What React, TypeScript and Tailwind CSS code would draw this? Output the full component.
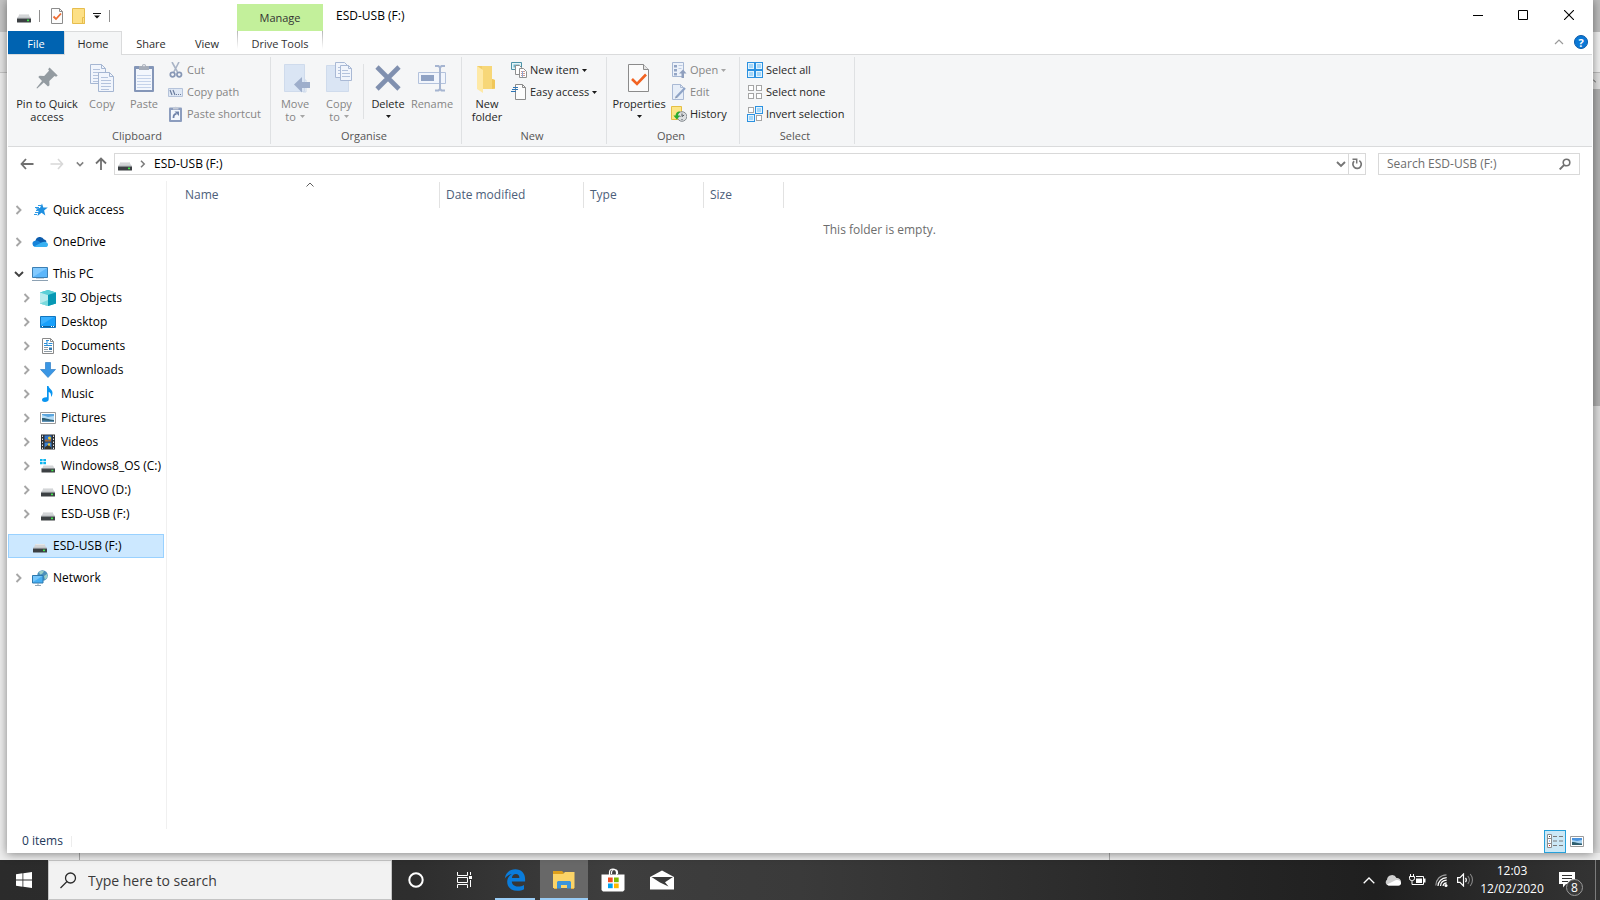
import React from "react";

type IconProps = { className?: string };

/* ---------- shared glyphs ---------- */

function DriveIcon({ className = "h-4 w-4" }: IconProps) {
  return (
    <svg viewBox="0 0 16 16" className={className} aria-hidden="true">
      <path d="M3.6 6h8.800l2.400 4.500H1.200z" fill="#d3d5d7" />
      <path d="M3.6 6h8.800l.5 1H3.100z" fill="#e6e7e8" />
      <rect x="1" y="10.200" width="14" height="4.300" rx="0.6" fill="#3c4043" />
      <rect x="1" y="9.800" width="14" height="1" fill="#8d9194" />
      <rect x="11" y="11.600" width="2" height="1.600" fill="#3ee84a" />
    </svg>
  );
}

function SystemDriveIcon() {
  return (
    <svg viewBox="0 0 16 16" className="h-4 w-4" aria-hidden="true">
      <path d="M3.500 7.500h9.500l1.900 3.400H1.800z" fill="#d3d5d7" />
      <rect x="1.500" y="10.500" width="13.500" height="4" rx="0.6" fill="#3c4043" />
      <rect x="1.500" y="10.200" width="13.500" height="0.900" fill="#8d9194" />
      <rect x="11.400" y="11.800" width="2" height="1.500" fill="#3ee84a" />
      <path d="M0 1h2.600v2.300H0zM3.300 1H6v2.300H3.300zM0 4h2.600v2.300H0zM3.300 4H6v2.300H3.300z" fill="#0fb5ee" />
    </svg>
  );
}

function Chevron({ className }: IconProps) {
  return (
    <svg viewBox="0 0 10 10" className={className ?? "h-[10px] w-[10px]"} fill="none" aria-hidden="true">
      <path d="M2.500 1l4 4-4 4" stroke="currentColor" strokeWidth="1.900" />
    </svg>
  );
}

function ChevronDown({ className }: IconProps) {
  return (
    <svg viewBox="0 0 10 10" className={className ?? "h-[10px] w-[10px]"} fill="none" aria-hidden="true">
      <path d="M1 3l4 4 4-4" stroke="currentColor" strokeWidth="1.900" />
    </svg>
  );
}

function Caret({ muted = false }: { muted?: boolean }) {
  return (
    <svg viewBox="0 0 5 3" className={muted ? "h-[3px] w-[5px] text-[#a6a6a6]" : "h-[3px] w-[5px] text-[#1a1a1a]"} aria-hidden="true">
      <path d="M0 0h5L2.500 3z" fill="currentColor" />
    </svg>
  );
}

/* ---------- quick access toolbar ---------- */

function CheckPage({ className = "h-4 w-4" }: IconProps) {
  return (
    <svg viewBox="0 0 16 16" className={className} fill="none" aria-hidden="true">
      <path d="M2.500.500h8l3 3v12h-11z" fill="#fcfcfc" stroke="#8c8c8c" />
      <path d="M10.500.500v3h3" stroke="#8c8c8c" />
      <path d="M4.500 8.500L7 11l5-5.500" stroke="#ed6b31" strokeWidth="1.800" />
    </svg>
  );
}

function FolderTall() {
  return (
    <svg viewBox="0 0 14 16" className="h-4 w-[14px]" fill="none" aria-hidden="true">
      <path d="M.500.500h12v15H.500z" fill="#fde086" stroke="#e6bd4d" />
      <path d="M10.500 9.500h2v6h-2z" fill="#fde086" stroke="#e6bd4d" />
    </svg>
  );
}

/* ---------- ribbon: large icons ---------- */

function PinIcon() {
  return (
    <svg viewBox="0 0 32 32" className="h-8 w-8" aria-hidden="true">
      <path d="M18.500 5.600l8.200 8-1.600 1.200-1.600-.700-5.200 4.800.200 4.400-1.500 1.200-4.200-4.100-6.600 6-.800-.500 5.600-7-3.700-3.900 1.300-1.300 4.600.300 4.800-5.200-.800-1.600z" fill="#939ba1" />
    </svg>
  );
}

function DocSheet({ x, y }: { x: number; y: number }) {
  return (
    <g transform={`translate(${x} ${y})`}>
      <path d="M.500.500h11l4 4v15H.500z" fill="#f1f5fc" stroke="#a5b6d2" />
      <path d="M11.500.500v4h4" fill="none" stroke="#a5b6d2" />
      <path d="M3 5.500h7M3 8.500h10M3 11.500h10M3 14.500h10M3 17.500h8" stroke="#b4c3dd" />
    </g>
  );
}

function CopyIcon() {
  return (
    <svg viewBox="0 0 32 32" className="h-8 w-8" aria-hidden="true">
      <DocSheet x={4} y={2} />
      <DocSheet x={12} y={10} />
    </svg>
  );
}

function PasteIcon() {
  return (
    <svg viewBox="0 0 32 32" className="h-8 w-8" aria-hidden="true">
      <rect x="6" y="4" width="20" height="26" rx="1" fill="#8496b8" />
      <rect x="8" y="7" width="16" height="21" fill="#f3f7fd" />
      <path d="M9 13.500h14M9 16.500h14M9 19.500h14M9 22.500h14M9 25.500h14" stroke="#c5d3ea" />
      <path d="M11 8V4h3a2 2 0 014 0h3v4z" fill="#a6adb9" />
      <circle cx="16" cy="3.600" r="0.800" fill="#f5f6f7" />
    </svg>
  );
}

function MoveIcon() {
  return (
    <svg viewBox="0 0 32 32" className="h-8 w-8" aria-hidden="true">
      <path d="M5.500 2.500h20v27h-20z" fill="#dae5f4" stroke="#cfdbec" />
      <path d="M26 18h1v12h-3" fill="none" stroke="#cfdbec" />
      <path d="M15 22.500l8-7.500v5h8v6h-8v4.500z" fill="#9eaecb" />
    </svg>
  );
}

function CopyToIcon() {
  return (
    <svg viewBox="0 0 32 32" className="h-8 w-8" aria-hidden="true">
      <path d="M3.500 3.500h22v26h-22z" fill="#dae5f4" stroke="#cfdbec" />
      <path d="M12.500.500h9l3 3v12h-12z" fill="#f1f5fc" stroke="#a9b9d5" />
      <path d="M15 5.500h8M15 8.500h8M15 11.500h8" stroke="#b4c3dd" />
      <path d="M17.500 3.500h8l3 3v12h-11z" fill="#f1f5fc" stroke="#a9b9d5" />
      <path d="M25.500 3.500v3h3" fill="none" stroke="#a9b9d5" />
      <path d="M19 8.500h6M19 11.500h8M19 14.500h8" stroke="#b4c3dd" />
    </svg>
  );
}

function DeleteIcon() {
  return (
    <svg viewBox="0 0 32 32" className="h-8 w-8" fill="none" aria-hidden="true">
      <path d="M5 5l22 22M27 5L5 27" stroke="#8090af" strokeWidth="4.600" />
    </svg>
  );
}

function RenameIcon() {
  return (
    <svg viewBox="0 0 32 32" className="h-8 w-8" fill="none" aria-hidden="true">
      <path d="M2.500 10.500h27v11h-27z" fill="#f1f5fc" stroke="#b3c2dc" />
      <rect x="5" y="13" width="13" height="6" fill="#8fa2c4" />
      <path d="M19 4h3.500l1.500 1.500L25.500 4H29M24 5v22M19 28.500h3.500L24 27l1.500 1.500H29" stroke="#a6b5d1" strokeWidth="2" />
    </svg>
  );
}

function NewFolderIcon() {
  return (
    <svg viewBox="0 0 32 32" className="h-8 w-8" aria-hidden="true">
      <path d="M6 4h15v13l3 2v8H6z" fill="#f1cd69" />
      <path d="M11 4h10v13l3 1v9H11z" fill="#f7d778" />
      <path d="M6 4l6 4v23l-6-4z" fill="#fee9a6" />
      <path d="M21 17l3 1v8l-3 1z" fill="#f0c75b" />
    </svg>
  );
}

function PropertiesIcon() {
  return (
    <svg viewBox="0 0 32 32" className="h-8 w-8" fill="none" aria-hidden="true">
      <path d="M5.500 2.500h15l5 5v22h-20z" fill="#fbfbfb" stroke="#8b8b8b" />
      <path d="M20.500 2.500v5h5" fill="#e5e5e5" stroke="#8b8b8b" />
      <path d="M9 17l5 5 9-9.500" stroke="#f26322" strokeWidth="2.600" />
    </svg>
  );
}

/* ---------- ribbon: small icons ---------- */

function Svg16({ children }: { children: React.ReactNode }) {
  return (
    <svg viewBox="0 0 16 16" className="h-4 w-4 shrink-0" fill="none" aria-hidden="true">
      {children}
    </svg>
  );
}

const CutIcon = () => (
  <Svg16>
    <path d="M4 0l5.500 10M11 0L5.800 10" stroke="#a9b4c6" strokeWidth="1.600" />
    <circle cx="4.600" cy="12.600" r="2.300" stroke="#8797b5" strokeWidth="1.700" />
    <circle cx="11.200" cy="12.600" r="2.300" stroke="#8797b5" strokeWidth="1.700" />
  </Svg16>
);
const CopyPathIcon = () => (
  <Svg16>
    <path d="M.500 4.500h14v8H.500z" fill="#dfe8f5" stroke="#b5c3da" />
    <path d="M2 6l2 5M5 6l2 5" stroke="#6b7d9e" strokeWidth="1.200" />
    <path d="M8 10.500h1M10 10.500h1M12 10.500h1" stroke="#6b7d9e" />
  </Svg16>
);
const PasteShortcutIcon = () => (
  <Svg16>
    <rect x="1" y="1.500" width="13" height="14.500" rx="1" fill="#8c9dbe" />
    <rect x="3" y="4" width="9" height="10" fill="#f3f7fd" />
    <path d="M5 3.500V2h1.500a1.200 1.200 0 012.400 0h1.600v1.500z" fill="#c3cad6" />
    <path d="M5.500 12c0-3 1-4.200 3-4.200" stroke="#6f83aa" strokeWidth="1.800" />
    <path d="M6.500 5.500h4.500V10z" fill="#6f83aa" />
  </Svg16>
);
const NewItemIcon = () => (
  <Svg16>
    <path d="M.500.500h10v7H.500z" fill="#e4f4f8" stroke="#4c93a8" />
    <path d="M2.500 2.500h6v3h-6z" fill="#68b5cb" />
    <path d="M4.500 3.500h4l2 2v7h-6z" fill="#fff" stroke="#8f8f8f" />
    <path d="M8.500 6.500h4l3 3v6h-7z" fill="#fff" stroke="#8f8f8f" />
    <path d="M10 9.500h4M10 11.500h4M10 13.500h4" stroke="#d09a92" />
    <path d="M11.500 9v6" stroke="#91a8d4" />
  </Svg16>
);
const EasyAccessIcon = () => (
  <Svg16>
    <path d="M4.500.500h7l3 3v12h-10z" fill="#fcfcfc" stroke="#8b8b8b" />
    <path d="M11.500.500v3h3" stroke="#8b8b8b" />
    <path d="M2 3.500h5M1 5.500h6M0 7.500h5" stroke="#2e75b5" strokeWidth="1.200" />
  </Svg16>
);
const OpenIcon = () => (
  <Svg16>
    <path d="M1.500.500h11v14h-11z" fill="#edf2fa" stroke="#a6b7d3" />
    <path d="M3 3h3v2.500H3zM3 7h3v2.500H3zM3 11h3v2.500H3z" fill="#93a5c5" />
    <path d="M7.500 3.500h4M7.500 6.500h3" stroke="#bccae0" />
    <path d="M12 7.500l3.500 4H13V16h-2.500v-4.500H8z" fill="#8f9fbe" />
  </Svg16>
);
const EditIcon = () => (
  <Svg16>
    <path d="M1.500.500h8l3 3v12h-11z" fill="#e7eef8" stroke="#a9b9d4" />
    <path d="M9.500.500v3h3" stroke="#a9b9d4" />
    <path d="M5.500 13L14 4" stroke="#8fa4c7" strokeWidth="2.200" />
    <path d="M4 14.500l.8-2.400 1.500 1.500z" fill="#7f8ba2" />
  </Svg16>
);
const HistoryIcon = () => (
  <Svg16>
    <path d="M.500.500h10v13H.500z" fill="#fde687" stroke="#e5bf45" />
    <circle cx="11" cy="10.500" r="4.800" fill="#dcdfe1" stroke="#858b90" />
    <path d="M11 7.500v3l2.200-1.500M8.500 10.500h1M11 13v1" stroke="#50565c" />
    <path d="M8.800 5.200C5.800 5.600 4.500 7.500 4.600 9.600H2.400l3.400 4 3.300-4H7c0-1.500.500-2.600 1.800-3.200z" fill="#2dad2f" />
  </Svg16>
);

function SelectGlyph({ on }: { on: boolean[] }) {
  const spots = [
    [0, 0],
    [8, 0],
    [0, 8],
    [8, 8],
  ];
  return (
    <Svg16>
      {spots.map(([x, y], i) =>
        on[i] ? (
          <g key={i}>
            <rect x={x + 0.5} y={y + 0.5} width="7" height="7" fill="#e3f3fd" stroke="#2b91e0" />
            <rect x={x + 2} y={y + 2} width="4" height="4" fill="#a5d7f9" />
          </g>
        ) : (
          <rect key={i} x={x + 1.5} y={y + 1.5} width="5" height="5" fill="#fff" stroke="#a5a5a5" />
        ),
      )}
    </Svg16>
  );
}

/* ---------- navigation tree icons ---------- */

const StarIcon = () => (
  <Svg16>
    <path d="M10 1.500l1.300 4 4.500.100-3.700 2.900 1.200 5-3.800-2.700L5.500 14l1-5-2.900-2.500L8 6z" fill="#1e8fe0" />
    <path d="M6 3.500h3M3 5.500h4M4 8.500h3M3 10.500h4M2 12.500h3" stroke="#2f9ae6" />
  </Svg16>
);
const OneDriveIcon = () => (
  <Svg16>
    <path d="M3.500 7A4.500 4.500 0 0112 5.500c1.500.200 2 1 2.500 2L8 11 2 8z" fill="#0b5cad" />
    <path d="M3.300 13a3.200 3.200 0 01-.300-6.300C4.700 6 6.500 6.500 8 8l5 5z" fill="#1683d9" />
    <path d="M2 12.600L10 8.200c2-1 5.700-.800 6 2.300.100 1.500-.900 2.500-2.400 2.500H3.300z" fill="#38b1f2" />
  </Svg16>
);
const ThisPcIcon = () => (
  <Svg16>
    <path d="M.500 1.500h15v10H.500z" fill="#5cb6fa" stroke="#3c7fb3" />
    <path d="M1 11V2h14z" fill="#82caff" />
    <path d="M4 12.500h8" stroke="#c7d2db" />
    <path d="M0 14.500h16" stroke="#8da1b3" />
  </Svg16>
);
const ObjectsIcon = () => (
  <Svg16>
    <path d="M8 0l8 2.500v11L8 16 0 13.500v-11z" fill="#2bbccb" />
    <path d="M8 0l8 2.500L8 5 0 2.500z" fill="#5acfd6" />
    <path d="M0 2.500L8 5v11l-8-2.500z" fill="#b8ecee" />
    <path d="M8 5l8-2.500v11L8 16z" fill="#0798b4" />
    <path d="M0 13.500l8-3.500v6z" fill="#7adadd" />
  </Svg16>
);
const DesktopIcon = () => (
  <Svg16>
    <path d="M.500 2.500h15v11H.500z" fill="#18a0fb" stroke="#1276bf" />
    <path d="M1 11l13-8H1z" fill="#3bb1ff" />
    <path d="M1 12.500h14" stroke="#0f5f9c" />
    <path d="M2 12.500h1M11 12.500h1M13 12.500h1" stroke="#fff" />
  </Svg16>
);
const DocumentsIcon = () => (
  <Svg16>
    <path d="M2.500.500h8l3 3v12h-11z" fill="#fff" stroke="#8a8a8a" />
    <path d="M10.500.500v3h3" stroke="#8a8a8a" />
    <path d="M6 2.500h3M4 5.500h3M8.500 5.500h4M4 7.500h8M7 3v4" stroke="#2b8fd8" />
    <path d="M4 9.500h4M4 11.500h4M4 13.500h8" stroke="#8f9ca6" />
    <path d="M9 9.500h3v2.500H9z" fill="#2f79b0" />
  </Svg16>
);
const DownloadsIcon = () => (
  <Svg16>
    <path d="M5.500.500h5v7h5L8 15.500.500 7.500h5z" fill="#3a96e4" stroke="#2f7fc7" strokeWidth="0.700" />
  </Svg16>
);
const MusicIcon = () => (
  <Svg16>
    <path d="M7 0h1.500c.500 2.500 4 3.500 4 7 0 2-.800 3-1.500 4 .300-3-.500-4.500-2.300-5v7.200C8.700 15 7 16 5 16c-1.800 0-3-.800-3-2.200C2 12 4 11 7 11.200z" fill="#0a95f0" />
  </Svg16>
);
const PicturesIcon = () => (
  <Svg16>
    <path d="M.500 2.500h15v11H.500z" fill="#fff" stroke="#9a9a9a" />
    <rect x="2" y="4" width="12" height="8" fill="#b5dcf6" />
    <path d="M2 4h12v2L8 7 2 5z" fill="#5ca6de" />
    <path d="M2 8c3-.500 5 1 12 2v2H2z" fill="#2f5f73" />
    <path d="M2 10.500c4 0 8 .500 12 .800V12H2z" fill="#5f93b8" />
  </Svg16>
);
const VideosIcon = () => (
  <Svg16>
    <rect x="1" y="0.500" width="14" height="15" fill="#2c2f33" />
    <path d="M2.500 1.500v14M13.500 1.500v14" stroke="#e9e9e9" strokeDasharray="1.500 1.500" />
    <rect x="4.500" y="1.500" width="7" height="6" fill="#2f73c9" />
    <rect x="4.500" y="8.500" width="7" height="6.500" fill="#3b82d4" />
    <path d="M5 6.500c1-2 2-1 3 0l3-2v3H5z" fill="#b06a2a" />
    <circle cx="9.500" cy="4" r="1.500" fill="#f0c932" />
    <path d="M5 13l3-2 3 2v2H5z" fill="#3a3324" />
    <circle cx="9" cy="10.500" r="1.200" fill="#f0c932" />
  </Svg16>
);
const NetworkIcon = () => (
  <Svg16>
    <circle cx="10.500" cy="5.500" r="5.300" fill="#4a90bb" />
    <path d="M7 2c2-1.500 4-1.500 5-.500L10 4 8 4.500zM12 6l3-2 .500 3L13 10z" fill="#9bcfc6" />
    <path d="M.500 5.500h10.500v7.500H.500z" fill="#46aef2" stroke="#2c78ae" />
    <path d="M1 12V6h9.500z" fill="#76c6fa" />
    <path d="M3 15.500h6M6 13v2" stroke="#8fa6b6" />
  </Svg16>
);

/* ---------- ribbon building blocks ---------- */

function BigButton({ icon, lines, width, caret, muted = false }: { icon: React.ReactNode; lines: string[]; width: string; caret?: "inline" | "below"; muted?: boolean }) {
  return (
    <button disabled={muted} className={`${width} flex shrink-0 flex-col items-center text-[11px] leading-[13px] whitespace-nowrap ${muted ? "text-[#858585]" : "text-[#262626]"}`}>
      <span className="mb-[3px]">{icon}</span>
      {lines.map((line, i) => (
        <span key={line} className="flex items-center gap-1">
          {line}
          {caret === "inline" && i === lines.length - 1 && <Caret muted={muted} />}
        </span>
      ))}
      {caret === "below" && (
        <span className="flex h-[13px] items-center">
          <Caret />
        </span>
      )}
    </button>
  );
}

function SmallButton({ icon, label, caret = false, muted = false }: { icon: React.ReactNode; label: string; caret?: boolean; muted?: boolean }) {
  return (
    <button disabled={muted} className={`flex h-[22px] items-center gap-[3px] text-[11px] whitespace-nowrap ${muted ? "text-[#858585]" : "text-[#262626]"}`}>
      {icon}
      <span>{label}</span>
      {caret && <Caret muted={muted} />}
    </button>
  );
}

function Group({ label, width, children }: { label: string; width: string; children: React.ReactNode }) {
  return (
    <section aria-label={label} className={`${width} my-[2px] flex shrink-0 flex-col border-r border-[#dfe1e3]`}>
      <div className="flex flex-1 items-start">{children}</div>
      <div className="h-4 pr-1 text-center text-[11px] leading-4 text-[#555]">{label}</div>
    </section>
  );
}

/* ---------- window regions ---------- */

function WindowTop() {
  return (
    <header className="flex">
      <div className="flex flex-col">
        <div className="flex h-[31px] w-[229px] items-center pl-2">
          <DriveIcon />
          <span className="ml-[7px] h-3 w-px bg-[#8f8f8f]" />
          <button aria-label="Properties" className="ml-[9px]"><CheckPage /></button>
          <button aria-label="New folder" className="ml-[7px]"><FolderTall /></button>
          <button aria-label="Customise toolbar" className="ml-[7px]">
            <svg viewBox="0 0 8 6" className="h-[6px] w-2" aria-hidden="true">
              <path d="M0 0h8v1H0zM1 2.500h6L4 5.500z" fill="#111" />
            </svg>
          </button>
          <span className="ml-2 h-3 w-px bg-[#8f8f8f]" />
        </div>
        <nav className="flex h-[23px] text-[11px] leading-[25px] text-[#2b2b2b]">
          <button className="w-14 bg-[#0063b1] text-white">File</button>
          <button className="relative w-[58px] border-x border-t border-[#dadbdc] bg-[#f5f6f7] leading-6">
            Home
            <span className="absolute inset-x-0 -bottom-px h-px bg-[#f5f6f7]" />
          </button>
          <button className="w-[58px]">Share</button>
          <button className="w-[54px]">View</button>
        </nav>
      </div>
      <div className="flex w-[86px] flex-col text-[11px] text-[#333]">
        <div className="mt-1 h-[27px] bg-[#c3f09b] text-center leading-7">Manage</div>
        <div className="flex h-[23px] leading-[25px]">
          <span className="mb-[5px] w-px bg-linear-to-b from-[#b5b5b5] to-white" />
          <button className="flex-1">Drive Tools</button>
          <span className="mb-[5px] w-px bg-linear-to-b from-[#b5b5b5] to-white" />
        </div>
      </div>
      <h1 className="ml-[13px] h-[31px] flex-1 text-[12px] leading-[31px] text-black">ESD-USB (F:)</h1>
      <div className="flex flex-col">
        <div className="flex h-[30px] items-center">
          <button aria-label="Minimise" className="flex w-[45px] justify-center">
            <svg viewBox="0 0 10 10" className="h-[10px] w-[10px]"><path d="M0 5.500h10" stroke="#000" /></svg>
          </button>
          <button aria-label="Maximise" className="flex w-[45px] justify-center">
            <svg viewBox="0 0 10 10" className="h-[10px] w-[10px]" fill="none"><path d="M.500.500h9v9h-9z" stroke="#000" /></svg>
          </button>
          <button aria-label="Close" className="flex w-[47px] justify-center">
            <svg viewBox="0 0 10 10" className="h-[10px] w-[10px]" fill="none"><path d="M0 0l10 10M10 0L0 10" stroke="#000" strokeWidth="1.100" /></svg>
          </button>
        </div>
        <div className="flex h-6 items-center justify-end gap-[10px] pr-1">
          <button aria-label="Collapse ribbon" className="text-[#9a9a9a]">
            <svg viewBox="0 0 10 6" className="h-[6px] w-[10px]" fill="none"><path d="M1 5l4-4 4 4" stroke="currentColor" strokeWidth="1.200" /></svg>
          </button>
          <button aria-label="Help" className="flex h-[14px] w-[14px] items-center justify-center rounded-full border border-[#0a5aa8] bg-[#0a78d6] text-[11px] leading-none font-bold text-white">?</button>
        </div>
      </div>
    </header>
  );
}

function Ribbon() {
  return (
    <div className="flex h-[93px] border-y border-[#dadbdc] bg-[#f5f6f7]">
      <Group label="Clipboard" width="w-[263px]">
        <div className="flex pt-[5px] pl-1">
          <BigButton width="w-[70px]" icon={<PinIcon />} lines={["Pin to Quick", "access"]} />
          <BigButton width="w-10" icon={<CopyIcon />} lines={["Copy"]} muted />
          <BigButton width="w-11" icon={<PasteIcon />} lines={["Paste"]} muted />
        </div>
        <div className="ml-[2px] flex flex-col pt-[2px]">
          <SmallButton icon={<CutIcon />} label="Cut" muted />
          <SmallButton icon={<CopyPathIcon />} label="Copy path" muted />
          <SmallButton icon={<PasteShortcutIcon />} label="Paste shortcut" muted />
        </div>
      </Group>
      <Group label="Organise" width="w-[191px]">
        <div className="flex pt-[5px] pl-1">
          <BigButton width="w-10" icon={<MoveIcon />} lines={["Move", "to"]} caret="inline" muted />
          <BigButton width="w-12" icon={<CopyToIcon />} lines={["Copy", "to"]} caret="inline" muted />
          <span className="mt-[2px] h-[55px] w-px bg-[#dfe1e3]" />
          <BigButton width="w-12" icon={<DeleteIcon />} lines={["Delete"]} caret="below" />
          <BigButton width="w-10" icon={<RenameIcon />} lines={["Rename"]} muted />
        </div>
      </Group>
      <Group label="New" width="w-[145px]">
        <div className="flex pt-[5px] pl-1">
          <BigButton width="w-[42px]" icon={<NewFolderIcon />} lines={["New", "folder"]} />
        </div>
        <div className="ml-[3px] flex flex-col pt-[2px]">
          <SmallButton icon={<NewItemIcon />} label="New item" caret />
          <SmallButton icon={<EasyAccessIcon />} label="Easy access" caret />
        </div>
      </Group>
      <Group label="Open" width="w-[133px]">
        <div className="flex pt-[5px] pl-1">
          <BigButton width="w-14" icon={<PropertiesIcon />} lines={["Properties"]} caret="below" />
        </div>
        <div className="ml-1 flex flex-col pt-[2px]">
          <SmallButton icon={<OpenIcon />} label="Open" caret muted />
          <SmallButton icon={<EditIcon />} label="Edit" muted />
          <SmallButton icon={<HistoryIcon />} label="History" />
        </div>
      </Group>
      <Group label="Select" width="w-[115px]">
        <div className="ml-[7px] flex flex-col pt-[2px]">
          <SmallButton icon={<SelectGlyph on={[true, true, true, true]} />} label="Select all" />
          <SmallButton icon={<SelectGlyph on={[false, false, false, false]} />} label="Select none" />
          <SmallButton icon={<SelectGlyph on={[false, true, true, false]} />} label="Invert selection" />
        </div>
      </Group>
    </div>
  );
}

function AddressRow() {
  return (
    <div className="flex h-[34px] items-center pr-3 pl-3 text-[12px]">
      <button aria-label="Back" className="text-[#707070]">
        <svg viewBox="0 0 14 12" className="h-3 w-[14px]" fill="none"><path d="M6 1L1.500 6 6 11M2 6h11.500" stroke="currentColor" strokeWidth="1.800" /></svg>
      </button>
      <button aria-label="Forward" disabled className="ml-4 text-[#d8d8d8]">
        <svg viewBox="0 0 14 12" className="h-3 w-[14px]" fill="none"><path d="M8 1l4.500 5L8 11M12 6H.500" stroke="currentColor" strokeWidth="1.600" /></svg>
      </button>
      <button aria-label="Recent locations" className="ml-3 text-[#808080]"><ChevronDown className="h-2 w-2" /></button>
      <button aria-label="Up" className="ml-[11px] text-[#707070]">
        <svg viewBox="0 0 12 14" className="h-[14px] w-3" fill="none"><path d="M1 6.500L6 1.500l5 5M6 2v11" stroke="currentColor" strokeWidth="1.800" /></svg>
      </button>
      <div className="ml-[7px] flex h-[22px] flex-1 items-center border border-[#d9d9d9] pl-[2px]">
        <DriveIcon />
        <Chevron className="ml-[6px] h-2 w-2 text-[#7a7a7a]" />
        <button className="ml-[7px] text-black">ESD-USB (F:)</button>
        <button aria-label="Previous locations" className="mr-[2px] ml-auto text-[#757575]"><ChevronDown /></button>
        <button aria-label="Refresh" className="flex h-full w-[17px] items-center justify-center border-l border-[#d9d9d9] text-[#757575]">
          <svg viewBox="0 0 12 12" className="h-3 w-3" fill="none">
            <path d="M8.300 2.600a4.200 4.200 0 11-5.200.600" stroke="currentColor" strokeWidth="1.700" />
            <path d="M1.500 1.300h4.200v4.200" stroke="currentColor" strokeWidth="1.500" />
          </svg>
        </button>
      </div>
      <div className="ml-3 flex h-[22px] w-[202px] items-center border border-[#d9d9d9] pr-2 pl-2">
        <input aria-label="Search ESD-USB (F:)" placeholder="Search ESD-USB (F:)" className="min-w-0 flex-1 bg-transparent outline-none placeholder:text-[#6d6d6d]" />
        <svg viewBox="0 0 12 12" className="h-3 w-3 text-[#707070]" fill="none">
          <circle cx="7.500" cy="4.500" r="3.300" stroke="currentColor" strokeWidth="1.600" />
          <path d="M5.200 6.900L.700 11.400" stroke="currentColor" strokeWidth="2" />
        </svg>
      </div>
    </div>
  );
}

type Node = { label: string; icon: React.ReactNode; level?: 1; open?: boolean; gap?: boolean; selected?: boolean };

const nodes: Node[] = [
  { label: "Quick access", icon: <StarIcon /> },
  { label: "OneDrive", icon: <OneDriveIcon />, gap: true },
  { label: "This PC", icon: <ThisPcIcon />, gap: true, open: true },
  { label: "3D Objects", icon: <ObjectsIcon />, level: 1 },
  { label: "Desktop", icon: <DesktopIcon />, level: 1 },
  { label: "Documents", icon: <DocumentsIcon />, level: 1 },
  { label: "Downloads", icon: <DownloadsIcon />, level: 1 },
  { label: "Music", icon: <MusicIcon />, level: 1 },
  { label: "Pictures", icon: <PicturesIcon />, level: 1 },
  { label: "Videos", icon: <VideosIcon />, level: 1 },
  { label: "Windows8_OS (C:)", icon: <SystemDriveIcon />, level: 1 },
  { label: "LENOVO (D:)", icon: <DriveIcon />, level: 1 },
  { label: "ESD-USB (F:)", icon: <DriveIcon />, level: 1 },
  { label: "ESD-USB (F:)", icon: <DriveIcon />, gap: true, selected: true },
  { label: "Network", icon: <NetworkIcon />, gap: true },
];

function NavigationPane() {
  return (
    <nav className="w-[159px] shrink-0 border-r border-[#f0f0f0] pt-[17px] pr-[2px] text-[12px] text-black">
      <ul>
        {nodes.map((n, i) => (
          <li key={i} className={n.gap ? "mt-2" : ""}>
            <a
              href="#"
              className={`flex h-6 items-center border whitespace-nowrap ${n.level ? "pl-[13px]" : "pl-[5px]"} ${n.selected ? "border-[#99d1ff] bg-[#cce8ff]" : "border-transparent"}`}
            >
              <span className="flex w-[18px] text-[#a6a6a6]">
                {n.selected ? null : n.open ? <ChevronDown className="h-[10px] w-[10px] text-[#404040]" /> : <Chevron />}
              </span>
              {n.icon}
              <span className="ml-[5px]">{n.label}</span>
            </a>
          </li>
        ))}
      </ul>
    </nav>
  );
}

function FileList() {
  return (
    <main className="min-w-0 flex-1 pt-px text-[12px]">
      <table className="w-full table-fixed border-separate border-spacing-0 text-left text-[#4c607a]">
        <thead>
          <tr className="h-[26px]">
            <th className="relative w-[273px] border-r border-[#e2e2e2] pl-[18px] font-normal">
              Name
              <svg viewBox="0 0 8 5" className="absolute top-0 left-[139px] h-[5px] w-2" fill="none" aria-hidden="true">
                <path d="M.500 4.500L4 1l3.500 3.500" stroke="#5f5f5f" />
              </svg>
            </th>
            <th className="w-36 border-r border-[#e2e2e2] pl-[6px] font-normal">Date modified</th>
            <th className="w-[120px] border-r border-[#e2e2e2] pl-[6px] font-normal">Type</th>
            <th className="w-20 border-r border-[#e2e2e2] pl-[6px] font-normal">Size</th>
            <td />
          </tr>
        </thead>
        <tbody>
          <tr>
            <td colSpan={5} className="h-11 text-center text-[#6d6d6d]">This folder is empty.</td>
          </tr>
        </tbody>
      </table>
    </main>
  );
}

function StatusBar() {
  return (
    <footer className="flex h-6 items-center pr-2 pl-[14px] text-[12px] text-[#1e395b]">
      <span>0 items</span>
      <span className="ml-2 h-[11px] w-px bg-[#ededed]" />
      <button aria-label="Details view" className="ml-auto flex h-[23px] w-[22px] items-center justify-center border border-[#26a0da] bg-[#cbe8f6]">
        <svg viewBox="0 0 16 14" className="h-[14px] w-4" fill="none">
          <path d="M.500.500h4v13h-4zM.500 4.500h4M.500 9.500h4" fill="#fff" stroke="#8c8c8c" />
          <path d="M2 2.500h1" stroke="#444" />
          <path d="M2 7h1" stroke="#2f80ed" />
          <path d="M2 11.500h1" stroke="#e02020" />
          <path d="M6 2.500h4M12 2.500h4M6 7h4M12 7h4M6 11.500h4M12 11.500h4" stroke="#7a7a7a" />
        </svg>
      </button>
      <button aria-label="Large icons view" className="ml-1">
        <svg viewBox="0 0 14 11" className="h-[11px] w-[14px]" fill="none">
          <path d="M.500.500h13v10H.500z" fill="#fff" stroke="#9a9a9a" />
          <rect x="2" y="2" width="10" height="7" fill="#a9d4f2" />
          <path d="M2 2h10v2L7 5 2 4z" fill="#4b93dd" />
          <path d="M2 6c3-.500 5 1 10 1.500V9H2z" fill="#2f5f6f" />
        </svg>
      </button>
    </footer>
  );
}

/* ---------- taskbar ---------- */

function Taskbar() {
  return (
    <div className="flex h-10 shrink-0 items-stretch bg-[linear-gradient(90deg,#2b2b2b_0%,#2e2e2e_26%,#3e3e3e_38%,#3a3a3a_50%,#282828_72%,#1f1f1f_86%,#343434_100%)] text-white">
      <button aria-label="Start" className="flex w-12 items-center justify-center">
        <svg viewBox="0 0 16 16" className="h-4 w-4"><path d="M0 2.200L6.500 1.300v6.300H0zM7.300 1.200L16 0v7.600H7.300zM0 8.400h6.500v6.300L0 13.800zM7.300 8.400H16V16l-8.700-1.200z" fill="#fff" /></svg>
      </button>
      <label className="flex w-[344px] items-center border border-[#c4c4c4] bg-[#f2f2f2] pl-[11px]">
        <svg viewBox="0 0 17 17" className="h-[17px] w-[17px]" fill="none" aria-hidden="true">
          <circle cx="10.500" cy="6" r="5" stroke="#2b2b2b" strokeWidth="1.300" />
          <path d="M7 9.500L.500 16" stroke="#2b2b2b" strokeWidth="1.300" />
        </svg>
        <input aria-label="Type here to search" placeholder="Type here to search" className="ml-[11px] min-w-0 flex-1 bg-transparent text-[14px] outline-none placeholder:text-[#3a3a3a]" />
      </label>
      <button aria-label="Cortana" className="flex w-12 items-center justify-center">
        <svg viewBox="0 0 16 16" className="h-4 w-4" fill="none"><circle cx="8" cy="8" r="6.700" stroke="#fff" strokeWidth="2" /></svg>
      </button>
      <button aria-label="Task view" className="flex w-12 items-center justify-center">
        <svg viewBox="0 0 17 16" className="h-4 w-[17px]" fill="none">
          <path d="M1.500 0v3.500h10V0M1.500 16v-3.500h10V16M1.500 5.500h10v5h-10zM14.500 0v3M14.500 8v7" stroke="#fff" />
          <rect x="13" y="4" width="3" height="3" fill="#fff" />
        </svg>
      </button>
      <button aria-label="Microsoft Edge" className="ml-[3px] flex w-12 flex-col items-center">
        <span className="flex flex-1 items-center pt-[2px]">
          <svg viewBox="0 0 22 22" className="h-[22px] w-[22px]">
            <path d="M.800 9.700C1.500 4 5.500.300 11.300.300c6 0 9.800 4.200 9.800 9.700v2.600H7.800c.200 3.600 3.300 5 6.200 5 2.200 0 4.300-.600 6-1.600v4.300c-1.900 1-4.200 1.500-6.700 1.500-6.300 0-10.100-3.700-10.100-9 0-3.400 1.900-6.300 4.800-7.800-3.200.500-5.600 2.300-7.200 4.700zM7.900 9h7.500c0-2.300-1.200-3.900-3.600-3.900-2.200 0-3.600 1.500-3.900 3.900z" fill="#0a7cdb" />
          </svg>
        </span>
        <span className="h-[2px] w-10 bg-[#99ccf5]" />
      </button>
      <button aria-label="File Explorer" className="ml-px flex w-12 flex-col items-center bg-[#686868]">
        <span className="flex flex-1 items-center pt-[2px]">
          <svg viewBox="0 0 22 18" className="h-[18px] w-[22px]">
            <path d="M0 0h9l1.500 1.500V4H0z" fill="#dfa01c" />
            <path d="M0 3h10l2-2h9.500v16H0z" fill="#fcd467" />
            <path d="M4 17.500V11l1-1h12l1 1v6.500h-4V14H8v3.500z" fill="#3b94db" />
            <path d="M1 17h3v1H1zM18 17h3v1h-3z" fill="#e8b43d" />
          </svg>
        </span>
        <span className="h-[2px] w-full bg-[#99ccf5]" />
      </button>
      <button aria-label="Microsoft Store" className="flex w-[50px] items-center justify-center">
        <svg viewBox="0 0 24 24" className="h-6 w-6" fill="none">
          <path d="M8.500 7V4.500a3.500 3.500 0 017 0V7M10.500 6V4.500a3 3 0 016 0V6" stroke="#fff" strokeWidth="1.200" />
          <path d="M.500 6.500h23V22L22 23.500H2L.500 22z" fill="#fff" />
          <path d="M7 9.500h4.700v4.700H7z" fill="#f04e23" />
          <path d="M13 9.500h4.700v4.700H13z" fill="#7eb900" />
          <path d="M7 15.500h4.700v4.700H7z" fill="#00a1ee" />
          <path d="M13 15.500h4.700v4.700H13z" fill="#ffb800" />
        </svg>
      </button>
      <button aria-label="Mail" className="flex w-12 items-center justify-center">
        <svg viewBox="0 0 24 20" className="h-5 w-6">
          <path d="M0 7l12-6.500L24 7v12.500H0z" fill="#fff" />
          <path d="M1.500 7H23l-8 5.300 3.500 4.200L10 12.500z" fill="#3a3a3a" />
        </svg>
      </button>
      <div className="ml-auto flex items-center">
        <button aria-label="Show hidden icons" className="flex w-6 justify-center">
          <svg viewBox="0 0 12 7" className="h-[7px] w-3" fill="none"><path d="M.700 6.300L6 1l5.300 5.300" stroke="#fff" strokeWidth="1.300" /></svg>
        </button>
        <button aria-label="OneDrive" className="flex w-6 justify-center">
          <svg viewBox="0 0 16 11" className="h-[11px] w-4">
            <path d="M3.500 10.500A3.200 3.200 0 012 4.800 5 5 0 0111.500 3 4 4 0 0116 7c0 2-1.200 3.500-3 3.500z" fill="#cfcfcf" />
            <path d="M2 9.500l8.500-4.300c3-.800 5.500.600 5.500 3 0 1.500-1.300 2.300-3 2.300H3.500z" fill="#fff" />
          </svg>
        </button>
        <button aria-label="Battery" className="flex w-6 justify-center">
          <svg viewBox="0 0 17 12" className="h-3 w-[17px]" fill="none">
            <path d="M1.500 0v3M4.500 0v3" stroke="#fff" />
            <path d="M.500 2.500h5v2.200A2 2 0 013.500 6.500h-1A2 2 0 01.500 4.700zM3 6.500v4" stroke="#fff" />
            <path d="M7 2.500h7.500v8H3" stroke="#fff" />
            <rect x="7" y="4.500" width="6" height="4.500" fill="#fff" />
            <rect x="15" y="4.500" width="1.500" height="4" fill="#fff" />
          </svg>
        </button>
        <button aria-label="Wi-Fi" className="flex w-6 justify-center">
          <svg viewBox="0 0 13 13" className="h-[13px] w-[13px]" fill="none">
            <path d="M.800 11.500C1 5.500 5 1 11.500.800" stroke="#9b9b9b" strokeWidth="1.200" />
            <path d="M3 12C3.200 7.500 6.500 4 11.700 3.700M5.500 12c.2-3 2.500-5.500 6.200-5.800M8 12c.2-1.600 1.500-3 3.700-3.200" stroke="#fff" strokeWidth="1.200" />
            <circle cx="11" cy="11.500" r="1.500" fill="#fff" />
          </svg>
        </button>
        <button aria-label="Volume" className="flex w-6 justify-center">
          <svg viewBox="0 0 17 14" className="h-[14px] w-[17px]" fill="none">
            <path d="M.600 4.600H3L6.500 1v12L3 9.400H.600z" stroke="#fff" strokeWidth="1.200" />
            <path d="M8.500 4.800c1 1.300 1 3.100 0 4.400" stroke="#fff" strokeWidth="1.200" />
            <path d="M10.800 3c2 2.300 2 5.700 0 8M13.200 1c3 3.400 3 8.600 0 12" stroke="#8b8b8b" strokeWidth="1.100" />
          </svg>
        </button>
        <button className="flex w-[70px] flex-col items-center text-[12px] leading-[18px] whitespace-nowrap">
          <span>12:03</span>
          <span>12/02/2020</span>
        </button>
        <button aria-label="8 notifications" className="relative ml-3 flex h-10 w-[36px] items-center">
          <svg viewBox="0 0 16 16" className="h-4 w-4" fill="none">
            <path d="M0 0h16v12H7l-3 3.500V12H0z" fill="#fff" />
            <path d="M3 3.500h10M3 6.500h10M3 9.500h6" stroke="#333" />
          </svg>
          <span className="absolute top-[19px] left-[7px] flex h-[17px] w-[17px] items-center justify-center rounded-full border border-[#9a9a9a] bg-[#3a3a3a] text-[12px] leading-none">8</span>
        </button>
        <span className="mr-1 h-full w-px bg-[#7c7c7c]" />
      </div>
    </div>
  );
}

export default function App() {
  return (
    <div className="flex h-screen flex-col overflow-hidden bg-[#ededed] font-['Open_Sans','Noto_Sans',sans-serif]">
      <div className="flex min-h-0 flex-1">
        <div className="flex w-[7px] shrink-0 flex-col">
          <span className="h-8 bg-[#c4c4c4]" />
          <span className="h-10 bg-[#e4e4e4]" />
          <span className="h-px bg-[#c4c4c4]" />
        </div>
        <div className="relative z-10 flex min-w-0 flex-1 flex-col bg-white px-px shadow-[0_1px_9px_rgba(0,0,0,0.45)]">
          <WindowTop />
          <Ribbon />
          <AddressRow />
          <div className="flex min-h-0 flex-1">
            <NavigationPane />
            <FileList />
          </div>
          <StatusBar />
        </div>
        <div className="flex w-[7px] shrink-0 flex-col bg-[#dcdcdc]">
          <span className="h-8 bg-[#bcbcbc]" />
          <span className="h-10 bg-[#f0f0f0]" />
          <span className="h-px bg-[#bdbdbd]" />
          <span className="flex h-4 items-center bg-[#e0e0e0]">
            <svg viewBox="0 0 3 4" className="h-1 w-[3px]" fill="none" aria-hidden="true">
              <path d="M0 .500L3 3.500" stroke="#555" />
            </svg>
          </span>
          <span className="h-[317px] bg-[#b0b0b0]" />
        </div>
      </div>
      <div className="flex h-[7px] shrink-0 pl-[79px]">
        <span className="w-px bg-[#aaa]" />
        <span className="ml-[1029px] w-px bg-[#aaa]" />
      </div>
      <Taskbar />
    </div>
  );
}
